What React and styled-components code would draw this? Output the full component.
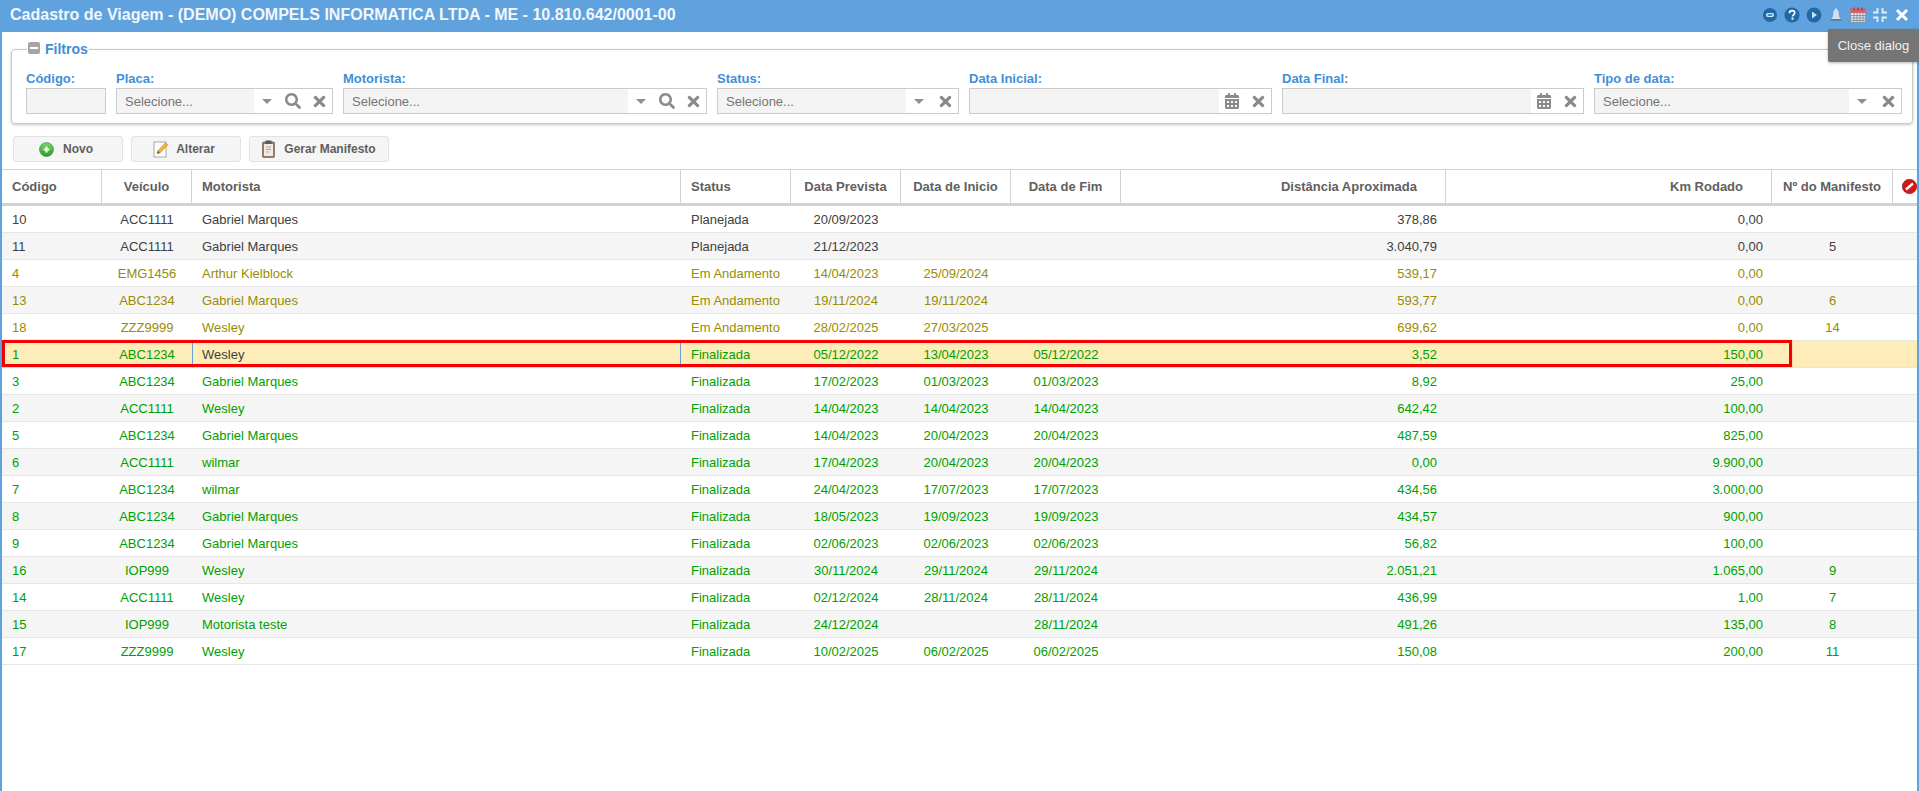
import React from "react";
import styled, { createGlobalStyle } from "styled-components";
import { FaCalendarAlt, FaSearch, FaTimes } from "react-icons/fa";

const GlobalStyle = createGlobalStyle`
  html, body {
    margin: 0;
    padding: 0;
    height: 100%;
    background: #fff;
    overflow: hidden;
  }
  body {
    font-family: "Liberation Sans", Arial, sans-serif;
    font-size: 13px;
    color: #404040;
  }
`;

const Dialog = styled.div`
  position: relative;
  box-sizing: border-box;
  height: 791px;
  border-left: 2px solid #5fa2dd;
  border-right: 2px solid #5fa2dd;
  background: #fff;
`;

const TitleBar = styled.header`
  box-sizing: border-box;
  margin: 0 -2px;
  height: 32px;
  padding: 0 9px 2px 10px;
  display: flex;
  align-items: center;
  justify-content: space-between;
  background: #5fa2dd;
`;

const Title = styled.h1`
  margin: 0;
  font-size: 16px;
  font-weight: bold;
  color: #f2f6fb;
`;

const TitleIcons = styled.div`
  display: flex;
  align-items: center;
  gap: 6px;
`;

const TitleIcon = styled.svg`
  width: 16px;
  height: 16px;
  display: block;
`;

const Tooltip = styled.div`
  position: absolute;
  top: 29px;
  right: -2px;
  width: 91px;
  height: 33px;
  box-sizing: border-box;
  display: flex;
  align-items: center;
  justify-content: center;
  background: #757575;
  color: #f0f0f0;
  font-size: 13px;
  border-radius: 2px 0 0 2px;
  box-shadow: 0 1px 3px rgba(0, 0, 0, 0.3);
`;

const Filters = styled.fieldset`
  margin: 8px 4px 0 9px;
  padding: 0 0 9px 14px;
  border: 1px solid #c8c8c8;
  border-radius: 4px;
  box-shadow: 0 1px 3px rgba(0, 0, 0, 0.22);
`;

const Legend = styled.legend`
  margin-left: 1px;
  padding: 0 1px;
  height: 18px;
  display: flex;
  align-items: center;
  gap: 5px;
  font-size: 14px;
  font-weight: bold;
  color: #3f8fd8;
`;

const Toggler = styled.span`
  width: 12px;
  height: 12px;
  margin-top: -2px;
  border-radius: 2px;
  background: #a5a5a5;
  display: flex;
  align-items: center;
  justify-content: center;
  &::before {
    content: "";
    width: 8px;
    height: 2px;
    background: #fff;
  }
`;

const FilterRow = styled.div`
  display: flex;
  gap: 10px;
  margin-top: 14px;
`;

const Field = styled.div`
  width: ${(p) => p.$w}px;
  flex: none;
`;

const FieldLabel = styled.label`
  display: block;
  height: 16px;
  line-height: 13px;
  font-size: 13px;
  font-weight: bold;
  color: #3f8fd8;
`;

const InputBox = styled.div`
  box-sizing: border-box;
  height: 26px;
  display: flex;
  border: 1px solid #cbcbcb;
  background: #fff;
`;

const InputText = styled.div`
  flex: 1;
  min-width: 0;
  padding-left: 8px;
  display: flex;
  align-items: center;
  background: #f4f4f4;
  color: #757575;
  font-size: 13px;
`;

const InputTool = styled.span`
  flex: none;
  width: 26px;
  display: flex;
  align-items: center;
  justify-content: center;
  color: #8a8a8a;
`;

const Caret = styled.span`
  width: 0;
  height: 0;
  border-left: 5px solid transparent;
  border-right: 5px solid transparent;
  border-top: 5px solid #8f8f8f;
`;

const Toolbar = styled.div`
  display: flex;
  gap: 8px;
  margin: 12px 0 7px 11px;
`;

const ToolButton = styled.button`
  box-sizing: border-box;
  width: ${(p) => p.$w}px;
  height: 26px;
  padding: 0 ${(p) => p.$pad || 0}px 0 0;
  display: flex;
  align-items: center;
  justify-content: center;
  gap: ${(p) => p.$gap}px;
  border: 1px solid #e2e2e2;
  border-radius: 3px;
  background: #f5f5f5;
  color: #606060;
  font-family: inherit;
  font-size: 12px;
  font-weight: bold;
`;

const TableWrap = styled.div`
  position: relative;
`;

const Table = styled.table`
  width: 1915px;
  table-layout: fixed;
  border-collapse: separate;
  border-spacing: 0;
`;

const HeadCell = styled.th`
  box-sizing: border-box;
  height: 37px;
  padding: ${(p) => (p.$align === "right" ? "0 28px 0 0" : p.$align === "left" ? "0 0 0 10px" : "0")};
  border-top: 1px solid #d2d2d2;
  border-right: 1px solid #d2d2d2;
  border-bottom: 3px solid #d2d2d2;
  text-align: ${(p) => p.$align || "center"};
  font-size: 13px;
  font-weight: bold;
  color: #606060;
  &:last-child {
    border-right: 0;
  }
`;

const Row = styled.tr`
  background: ${(p) => (p.$selected ? "#feedb9" : p.$alt ? "#f5f5f5" : "#fff")};
  color: ${(p) => p.$color};
`;

const Cell = styled.td`
  box-sizing: border-box;
  height: 27px;
  padding: ${(p) => (p.$align === "right" ? "0 9px 0 0" : p.$align === "left" ? "0 0 0 10px" : "0")};
  border-bottom: 1px solid #e6e6e6;
  text-align: ${(p) => p.$align || "center"};
  font-size: 13px;
  overflow: hidden;
  white-space: nowrap;
`;

const FocusCell = styled(Cell)`
  color: #404040;
  border-left: 1px solid #5fa2dd;
  border-right: 1px solid #5fa2dd;
  padding-left: 9px;
`;

const RedMark = styled.div`
  position: absolute;
  left: 0;
  top: 171px;
  width: 1790px;
  height: 27px;
  box-sizing: border-box;
  border: 3px solid #f50000;
  box-shadow: 0 0 1px rgba(245, 0, 0, 0.5);
  pointer-events: none;
`;

const NoSign = styled.svg`
  width: 15px;
  height: 15px;
  display: block;
  margin: 0 0 0 auto;
`;

const PLAN = "#404040";
const RUN = "#9a8c00";
const DONE = "#00a000";

const columns = [
  { name: "Código", w: 100, align: "left" },
  { name: "Veículo", w: 90 },
  { name: "Motorista", w: 489, align: "left" },
  { name: "Status", w: 110, align: "left" },
  { name: "Data Prevista", w: 110 },
  { name: "Data de Inicio", w: 110 },
  { name: "Data de Fim", w: 110 },
  { name: "Distância Aproximada", w: 325, align: "right" },
  { name: "Km Rodado", w: 326, align: "right" },
  { name: "Nº do Manifesto", w: 121 },
  { name: "", w: 24 },
];

const GM = "Gabriel Marques";
const rows = [
  [PLAN, "10", "ACC1111", GM, "Planejada", "20/09/2023", "", "", "378,86", "0,00", ""],
  [PLAN, "11", "ACC1111", GM, "Planejada", "21/12/2023", "", "", "3.040,79", "0,00", "5"],
  [RUN, "4", "EMG1456", "Arthur Kielblock", "Em Andamento", "14/04/2023", "25/09/2024", "", "539,17", "0,00", ""],
  [RUN, "13", "ABC1234", GM, "Em Andamento", "19/11/2024", "19/11/2024", "", "593,77", "0,00", "6"],
  [RUN, "18", "ZZZ9999", "Wesley", "Em Andamento", "28/02/2025", "27/03/2025", "", "699,62", "0,00", "14"],
  [DONE, "1", "ABC1234", "Wesley", "Finalizada", "05/12/2022", "13/04/2023", "05/12/2022", "3,52", "150,00", ""],
  [DONE, "3", "ABC1234", GM, "Finalizada", "17/02/2023", "01/03/2023", "01/03/2023", "8,92", "25,00", ""],
  [DONE, "2", "ACC1111", "Wesley", "Finalizada", "14/04/2023", "14/04/2023", "14/04/2023", "642,42", "100,00", ""],
  [DONE, "5", "ABC1234", GM, "Finalizada", "14/04/2023", "20/04/2023", "20/04/2023", "487,59", "825,00", ""],
  [DONE, "6", "ACC1111", "wilmar", "Finalizada", "17/04/2023", "20/04/2023", "20/04/2023", "0,00", "9.900,00", ""],
  [DONE, "7", "ABC1234", "wilmar", "Finalizada", "24/04/2023", "17/07/2023", "17/07/2023", "434,56", "3.000,00", ""],
  [DONE, "8", "ABC1234", GM, "Finalizada", "18/05/2023", "19/09/2023", "19/09/2023", "434,57", "900,00", ""],
  [DONE, "9", "ABC1234", GM, "Finalizada", "02/06/2023", "02/06/2023", "02/06/2023", "56,82", "100,00", ""],
  [DONE, "16", "IOP999", "Wesley", "Finalizada", "30/11/2024", "29/11/2024", "29/11/2024", "2.051,21", "1.065,00", "9"],
  [DONE, "14", "ACC1111", "Wesley", "Finalizada", "02/12/2024", "28/11/2024", "28/11/2024", "436,99", "1,00", "7"],
  [DONE, "15", "IOP999", "Motorista teste", "Finalizada", "24/12/2024", "", "28/11/2024", "491,26", "135,00", "8"],
  [DONE, "17", "ZZZ9999", "Wesley", "Finalizada", "10/02/2025", "06/02/2025", "06/02/2025", "150,08", "200,00", "11"],
];

const filters = [
  { label: "Código:", w: 80, plain: true },
  { label: "Placa:", w: 217, text: "Selecione...", search: true },
  { label: "Motorista:", w: 364, text: "Selecione...", search: true },
  { label: "Status:", w: 242, text: "Selecione..." },
  { label: "Data Inicial:", w: 303, date: true },
  { label: "Data Final:", w: 302, date: true },
  { label: "Tipo de data:", w: 308, text: "Selecione..." },
];

function HeaderIcons() {
  return (
    <TitleIcons>
      <TitleIcon viewBox="0 0 16 16">
        <circle cx="8" cy="8" r="7" fill="#1f69a6" />
        <rect x="4" y="6" width="8" height="4" rx="2" fill="#dfeaf4" />
        <rect x="5.5" y="7.2" width="5" height="1.6" rx="0.8" fill="#1f69a6" />
      </TitleIcon>
      <TitleIcon viewBox="0 0 16 16">
        <circle cx="8" cy="8" r="7.6" fill="#1f69a6" />
        <path d="M5.4 6.2C5.5 4.6 6.6 3.7 8.1 3.7c1.6 0 2.6 1 2.6 2.2 0 1.9-2.2 1.9-2.2 3.6" fill="none" stroke="#fff" strokeWidth="1.7" />
        <rect x="7.5" y="10.6" width="2" height="2" fill="#fff" />
      </TitleIcon>
      <TitleIcon viewBox="0 0 16 16">
        <circle cx="8" cy="8" r="7.4" fill="#1f69a6" />
        <path d="M6 4.6 11 8 6 11.4Z" fill="#cfe0f0" />
      </TitleIcon>
      <TitleIcon viewBox="0 0 16 16">
        <path d="M8 1.5c.9 0 1.2.6 1.3 1.2C10.700 3.500 10.800 6 11 8.500c.1 1.500 1 2.500 2 3.500H3c1-1 1.900-2 2-3.500C5.200 6 5.300 3.500 6.700 2.700 6.800 2.100 7.100 1.500 8 1.500Z" fill="#d3dee8" />
        <path d="M2.500 12h11v1.800h-11Z" fill="#4d7fae" />
      </TitleIcon>
      <TitleIcon viewBox="0 0 16 16">
        <rect x="0.500" y="1.500" width="15" height="14" fill="#dfe4ea" stroke="#6e7f90" strokeWidth="0.600" />
        <rect x="0.500" y="1.500" width="15" height="4.500" fill="#d9606a" />
        <path d="M4 0.500v3M8 0.500v3M12 0.500v3" stroke="#6b3b40" strokeWidth="1" />
        <path d="M1 8.500h14M1 11h14M1 13.500h14M4 6v9M7 6v9M10 6v9M13 6v9" stroke="#7d8996" strokeWidth="0.800" />
      </TitleIcon>
      <TitleIcon viewBox="0 0 16 16">
        <path d="M5.500 1v4.500H1M10.500 1v4.500H15M5.500 15v-4.500H1M10.500 15v-4.500H15" fill="none" stroke="#e3eef8" strokeWidth="1.800" />
      </TitleIcon>
      <TitleIcon viewBox="0 0 16 16">
        <path d="M3 3l10 10M13 3 3 13" stroke="#fff" strokeWidth="3" />
      </TitleIcon>
    </TitleIcons>
  );
}

function PlusIcon() {
  return (
    <svg width="15" height="15" viewBox="0 0 15 15">
      <defs>
        <linearGradient id="plusFill" x1="0" y1="0" x2="0" y2="1">
          <stop offset="0" stopColor="#7fd36a" />
          <stop offset="1" stopColor="#2a9a2a" />
        </linearGradient>
      </defs>
      <circle cx="7.500" cy="7.500" r="7" fill="url(#plusFill)" stroke="#2b8f2a" strokeWidth="0.600" />
      <path d="M7.500 4.500v6M4.500 7.500h6" stroke="#e9f8e6" strokeWidth="2.200" />
    </svg>
  );
}

function EditIcon() {
  return (
    <svg width="16" height="18" viewBox="0 0 16 18">
      <rect x="1" y="2" width="12" height="15" fill="#fff" stroke="#a8a8a8" />
      <path d="M4 13.500 5 10.500 12.500 2.500 15 5 7 13Z" fill="#eeb04a" stroke="#c98a2c" strokeWidth="0.500" />
      <path d="M4 13.500 5 10.500 7 13Z" fill="#6d5a3a" />
    </svg>
  );
}

function ClipboardIcon() {
  return (
    <svg width="13" height="18" viewBox="0 0 13 18">
      <rect x="0.500" y="2" width="12" height="15.500" rx="1" fill="#9c7a5c" stroke="#6d523c" strokeWidth="0.600" />
      <rect x="2" y="4" width="9" height="12" fill="#efeae4" />
      <rect x="3.500" y="0.500" width="6" height="3.500" fill="#5a5a5a" />
      <path d="M4 7h5M4 9.500h5M4 12h3" stroke="#b08f8f" strokeWidth="0.800" />
    </svg>
  );
}

function FilterField({ item }) {
  return (
    <Field $w={item.w}>
      <FieldLabel>{item.label}</FieldLabel>
      <InputBox>
        <InputText>{item.text}</InputText>
        {!item.plain && (
          <>
            <InputTool>{item.date ? <FaCalendarAlt size={16} /> : <Caret />}</InputTool>
            {item.search && <InputTool><FaSearch size={16} /></InputTool>}
            <InputTool><FaTimes size={17} /></InputTool>
          </>
        )}
      </InputBox>
    </Field>
  );
}

export default function App() {
  return (
    <>
      <GlobalStyle />
      <Dialog>
        <TitleBar>
          <Title>Cadastro de Viagem - (DEMO) COMPELS INFORMATICA LTDA - ME - 10.810.642/0001-00</Title>
          <HeaderIcons />
        </TitleBar>
        <Tooltip>Close dialog</Tooltip>

        <Filters>
          <Legend>
            <Toggler />
            Filtros
          </Legend>
          <FilterRow>
            {filters.map((f) => (
              <FilterField key={f.label} item={f} />
            ))}
          </FilterRow>
        </Filters>

        <Toolbar>
          <ToolButton $w={110} $gap={9} $pad={4}>
            <PlusIcon />
            Novo
          </ToolButton>
          <ToolButton $w={110} $gap={7} $pad={4}>
            <EditIcon />
            Alterar
          </ToolButton>
          <ToolButton $w={140} $gap={9}>
            <ClipboardIcon />
            Gerar Manifesto
          </ToolButton>
        </Toolbar>

        <TableWrap>
          <Table>
            <colgroup>
              {columns.map((c) => (
                <col key={c.name} width={c.w} />
              ))}
            </colgroup>
            <thead>
              <tr>
                {columns.map((c) => (
                  <HeadCell key={c.name} $align={c.align}>
                    {c.name || (
                      <NoSign viewBox="0 0 15 15">
                        <circle cx="7.500" cy="7.500" r="7.200" fill="#d01818" stroke="#8f1010" strokeWidth="0.600" />
                        <path d="M4 10.500 11 4.500" stroke="#fff" strokeWidth="2.400" />
                      </NoSign>
                    )}
                  </HeadCell>
                ))}
              </tr>
            </thead>
            <tbody>
              {rows.map(([color, ...cells], i) => {
                const selected = cells[0] === "1";
                return (
                  <Row key={cells[0]} $color={color} $alt={i % 2 === 1} $selected={selected}>
                    {cells.map((v, j) =>
                      selected && j === 2 ? (
                        <FocusCell key={j} $align="left">{v}</FocusCell>
                      ) : (
                        <Cell key={j} $align={columns[j].align}>{v}</Cell>
                      )
                    )}
                    <Cell />
                  </Row>
                );
              })}
            </tbody>
          </Table>
          <RedMark />
        </TableWrap>
      </Dialog>
    </>
  );
}
